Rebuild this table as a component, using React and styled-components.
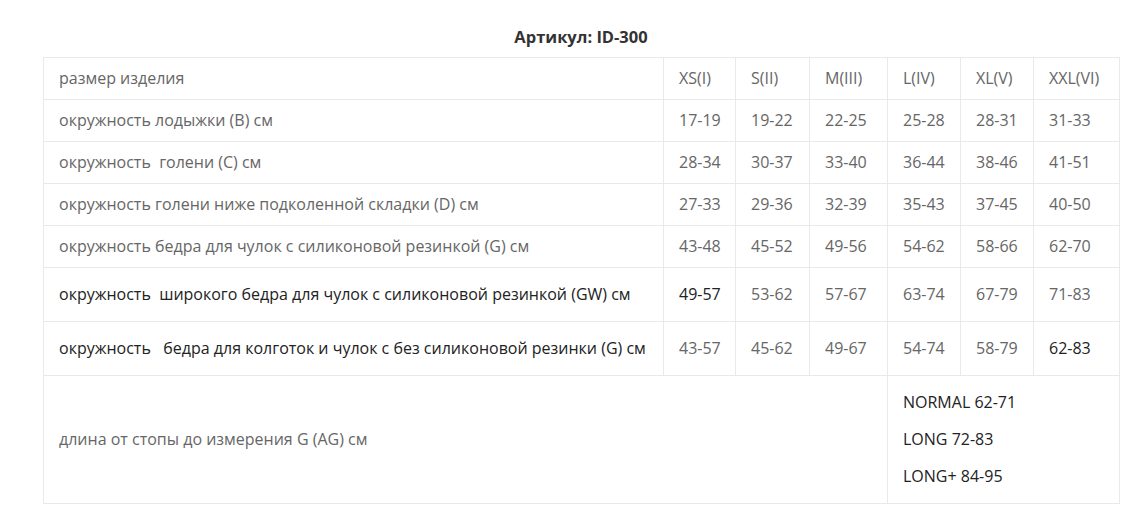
import React from "react";
import styled, { createGlobalStyle } from "styled-components";

const GlobalStyle = createGlobalStyle`
  body {
    margin: 0;
    background: #fff;
    font-family: "Open Sans", "Liberation Sans", sans-serif;
  }
`;

const sizes = ["XS(I)", "S(II)", "M(III)", "L(IV)", "XL(V)", "XXL(VI)"];
const widths = [620, 72, 74, 78, 73, 73, 86];

// dark: which cells are printed in the darker colour
const rows = [
  { label: "окружность лодыжки (B) см", values: ["17-19", "19-22", "22-25", "25-28", "28-31", "31-33"] },
  { label: "окружность  голени (C) см", values: ["28-34", "30-37", "33-40", "36-44", "38-46", "41-51"] },
  { label: "окружность голени ниже подколенной складки (D) см", values: ["27-33", "29-36", "32-39", "35-43", "37-45", "40-50"] },
  { label: "окружность бедра для чулок с силиконовой резинкой (G) см", values: ["43-48", "45-52", "49-56", "54-62", "58-66", "62-70"] },
  {
    label: "окружность  широкого бедра для чулок с силиконовой резинкой (GW) см",
    values: ["49-57", "53-62", "57-67", "63-74", "67-79", "71-83"],
    tall: true,
    darkLabel: true,
    dark: [0],
  },
  {
    label: "окружность   бедра для колготок и чулок с без силиконовой резинки (G) см",
    values: ["43-57", "45-62", "49-67", "54-74", "58-79", "62-83"],
    tall: true,
    darkLabel: true,
    dark: [5],
  },
];

const lengths = ["NORMAL 62-71", "LONG 72-83", "LONG+ 84-95"];

export default function App() {
  return (
    <>
      <GlobalStyle />
      <Wrapper>
        <Title>Артикул: ID-300</Title>
        <Table>
          <colgroup>
            {widths.map((w, i) => (
              <col key={i} style={{ width: w }} />
            ))}
          </colgroup>
          <tbody>
            <tr>
              <Cell>размер изделия</Cell>
              {sizes.map((s) => (
                <Cell key={s}>{s}</Cell>
              ))}
            </tr>
            {rows.map((row) => (
              <tr key={row.label}>
                <Cell $tall={row.tall} $dark={row.darkLabel}>{row.label}</Cell>
                {row.values.map((v, i) => (
                  <Cell key={i} $tall={row.tall} $dark={row.dark?.includes(i)}>
                    {v}
                  </Cell>
                ))}
              </tr>
            ))}
            <tr>
              <Cell colSpan={4}>длина от стопы до измерения G (AG) см</Cell>
              <Cell colSpan={3}>
                <LengthList>
                  {lengths.map((l) => (
                    <span key={l}>{l}</span>
                  ))}
                </LengthList>
              </Cell>
            </tr>
          </tbody>
        </Table>
      </Wrapper>
    </>
  );
}

const Wrapper = styled.div`
  width: 1076px;
  margin-left: 43px;
  padding-top: 26px;
`;

const Title = styled.div`
  text-align: center;
  font-size: 16.5px;
  line-height: 22px;
  font-weight: 700;
  color: #333;
  margin-bottom: 9px;
`;

const Table = styled.table`
  width: 1076px;
  border-collapse: collapse;
  table-layout: fixed;
`;

const Cell = styled.td`
  border: 1px solid #e9e9e9;
  padding: ${(p) => (p.$tall ? "16px 15px" : "10px 15px")};
  font-size: 16px;
  line-height: 21px;
  color: ${(p) => (p.$dark ? "#222" : "#666")};
  vertical-align: middle;
  white-space: pre;
  text-align: left;
`;

const LengthList = styled.div`
  display: flex;
  flex-direction: column;
  gap: 16px;
  padding: 6px 0;
  color: #222;
`;
